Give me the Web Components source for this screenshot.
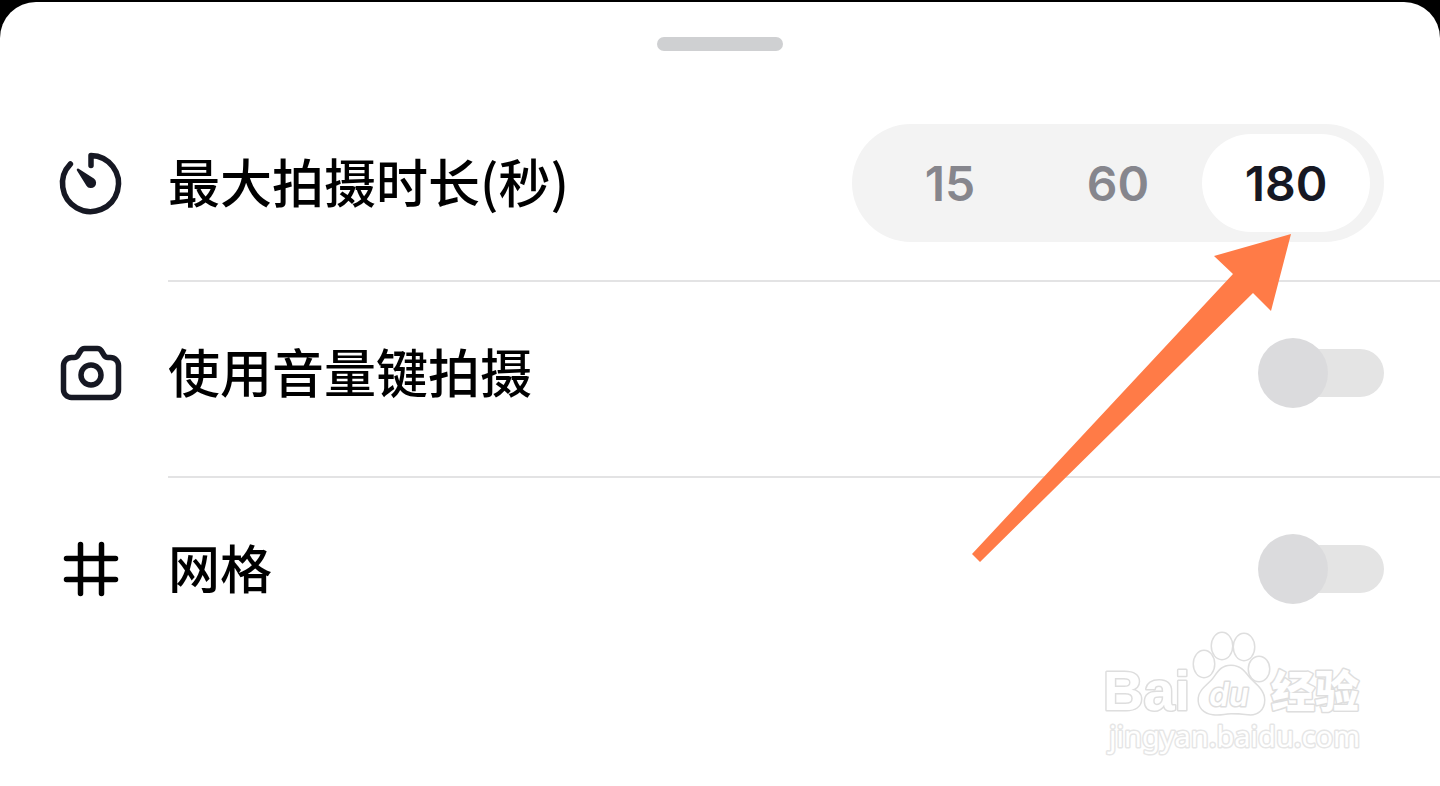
<!DOCTYPE html>
<html lang="zh-CN">
<head>
<meta charset="UTF-8">
<meta name="viewport" content="width=device-width, initial-scale=1">
<title>拍摄设置</title>
<style>
  body {
    margin: 0;
    background: #000;
    color: #000;
    font-family: Inter, "Noto Sans CJK SC", sans-serif;
  }
</style>
</head>
<body>

<bottom-sheet>
  <duration-row options="15,60,180" value="180">
    <line-icon slot="icon" name="timer"></line-icon>
    最大拍摄时长(秒)
  </duration-row>
  <toggle-row>
    <line-icon slot="icon" name="camera"></line-icon>
    使用音量键拍摄
  </toggle-row>
  <toggle-row last>
    <line-icon slot="icon" name="grid"></line-icon>
    网格
  </toggle-row>
  <pointer-arrow slot="overlay"></pointer-arrow>
  <site-watermark slot="overlay"></site-watermark>
</bottom-sheet>

<script>
/**
 * Line icons, all drawn on a 62 x 62 grid
 */
const ICONS = {
  timer: `
    <path d="M31 13.5V3.5A28 28 0 1 1 10.4 12"/>
    <path d="M18 17.8L27.5 33A4 4 0 1 0 33.2 27.6Z" fill="currentColor" stroke-width="2.5"/>`,
  camera: `
    <path d="M11.5 15.5H14c2 0 3.2-.8 4.2-2.6l2.3-3.9c1-1.7 2.2-2.5 4.2-2.5h12.6c2 0 3.2.8 4.2 2.5l2.3 3.9c1 1.8 2.2 2.6 4.2 2.6h2.5a8 8 0 0 1 8 8v24a8 8 0 0 1-8 8h-39a8 8 0 0 1-8-8v-24a8 8 0 0 1 8-8Z"/>
    <circle cx="31" cy="33" r="10"/>`,
  grid: `<path stroke="#000" d="M20.5 6.5v49M41.5 6.5v49M6.5 20.5h49M6.5 41.5h49"/>`
};

class LineIcon extends HTMLElement {
  constructor() {
    super();
    this.attachShadow({ mode: 'open' });
  }

  connectedCallback() {
    this.shadowRoot.innerHTML = `
      <style>
        :host { display: block; width: 62px; height: 62px; color: #161823; }
        svg { display: block; width: 100%; height: 100%; overflow: visible; }
      </style>
      <svg viewBox="0 0 62 62" fill="none" stroke="currentColor" stroke-width="5.5"
           stroke-linecap="round" stroke-linejoin="round" aria-hidden="true">
        ${ICONS[this.getAttribute('name')] || ''}
      </svg>
    `;
  }
}

/**
 * Bottom Sheet
 *
 * White panel with a grab handle. Rows go in the default slot.
 */
class BottomSheet extends HTMLElement {
  constructor() {
    super();
    this.attachShadow({ mode: 'open' });
  }

  connectedCallback() {
    this.shadowRoot.innerHTML = `
      <style>
        :host { display: block; padding-top: 2px; }
        .sheet { position: relative; min-height: calc(100vh - 2px); box-sizing: border-box; padding-top: 35px; border-radius: 36px 36px 0 0; background: #fff; }
        .handle { width: 126px; height: 14px; margin: 0 auto 73px; border-radius: 7px; background: #cfd0d2; }
      </style>
      <main class="sheet">
        <div class="handle"></div>
        <slot></slot>
        <slot name="overlay"></slot>
      </main>
    `;
  }
}

/**
 * Shared shell of a settings row: icon, label, control and a divider
 */
class SettingRow extends HTMLElement {
  constructor() {
    super();
    this.attachShadow({ mode: 'open' });
  }

  connectedCallback() {
    this.shadowRoot.innerHTML = `
      <style>
        :host { display: block; }
        .row { display: flex; align-items: center; padding: 56px 56px 68px 60px; }
        .label { flex: 1; margin-left: 46px; padding-bottom: 4px; font-size: 52px; line-height: 64px; font-weight: 500; font-family: "Noto Sans CJK SC", sans-serif; }
        .divider { height: 2px; margin-left: 168px; background: #e3e3e4; }
        :host([last]) .divider { display: none; }
        ${this.styles()}
      </style>
      ${this.renderRow()}
      <div class="divider"></div>
    `;
  }

  styles() {
    return '';
  }

  renderRow() {
    return '';
  }
}

class ToggleRow extends SettingRow {
  styles() {
    return `
      input { appearance: none; display: grid; align-items: center; width: 126px; height: 70px; margin: 0; cursor: pointer; }
      input::before, input::after { content: ""; grid-area: 1 / 1; }
      input::before { height: 48px; margin-left: 24px; border-radius: 24px; background: #e4e4e4; }
      input::after { width: 70px; height: 70px; border-radius: 50%; background: #dbdbdd; }
      input:checked::before { margin: 0 24px 0 0; background: #9be8ca; }
      input:checked::after { justify-self: end; background: #20c483; }
    `;
  }

  renderRow() {
    return `
      <div class="row">
        <slot name="icon"></slot>
        <label class="label" for="toggle"><slot></slot></label>
        <input type="checkbox" role="switch" id="toggle">
      </div>
    `;
  }
}

class DurationRow extends SettingRow {
  styles() {
    return `
      .row { padding-top: 0; padding-bottom: 38px; }
      .segments { display: flex; padding: 10px 14px; border-radius: 59px; background: #f3f3f3; }
      .segment { position: relative; display: grid; place-items: center; width: 168px; height: 98px; color: #86868d; font-size: 48px; line-height: 60px; font-weight: 600; cursor: pointer; }
      .segment input { appearance: none; position: absolute; inset: 0; margin: 0; border-radius: 49px; cursor: pointer; }
      .segment input:checked { background: #fff; }
      .segment input:checked + span { color: #161823; }
      .segment span { position: relative; padding-top: 2px; pointer-events: none; }
    `;
  }

  renderRow() {
    const value = this.getAttribute('value');
    const options = (this.getAttribute('options') || '').split(',');

    return `
      <div class="row">
        <slot name="icon"></slot>
        <div class="label" id="title"><slot></slot></div>
        <div class="segments" role="radiogroup" aria-labelledby="title">
          ${options.map(opt => `
            <label class="segment">
              <input type="radio" name="duration" value="${opt}" ${opt === value ? 'checked' : ''}>
              <span>${opt}</span>
            </label>
          `).join('')}
        </div>
      </div>
    `;
  }
}

/**
 * Orange arrow that lies over the rows and points at the chosen duration
 */
class PointerArrow extends HTMLElement {
  constructor() {
    super();
    this.attachShadow({ mode: 'open' });
  }

  connectedCallback() {
    this.shadowRoot.innerHTML = `
      <style>
        :host { position: absolute; top: 232px; right: 149px; pointer-events: none; }
        svg { display: block; }
      </style>
      <svg width="319" height="328" viewBox="0 0 319 328" aria-hidden="true">
        <path fill="#ff7b47" d="M319 0L242 22L261 40L0 320L8 328L281 59L299 77Z"/>
      </svg>
    `;
  }
}

/**
 * Watermark: white shapes and letters with a thin grey outline
 */
class SiteWatermark extends HTMLElement {
  constructor() {
    super();
    this.attachShadow({ mode: 'open' });
  }

  connectedCallback() {
    this.shadowRoot.innerHTML = `
      <style>
        :host { position: absolute; top: 624px; right: 70px; pointer-events: none; }
        svg { display: block; fill: #fff; stroke: #dedede; stroke-width: 3px; stroke-linejoin: round; paint-order: stroke; }
        .brand { font: 700 56px "Liberation Sans", sans-serif; }
        .paw { font: italic 600 32px Inter, sans-serif; }
        .zh { font: 900 44px "Noto Sans CJK SC", sans-serif; }
        .url { font: 400 29px "Noto Sans", sans-serif; stroke: #e6e6e6; }
      </style>
      <svg width="268" height="134" viewBox="0 0 268 134">
        <text class="brand" x="1" y="84">Bai</text>
        <ellipse cx="102" cy="38" rx="10" ry="13"/>
        <ellipse cx="120" cy="20" rx="10" ry="13"/>
        <ellipse cx="142" cy="21" rx="10" ry="13"/>
        <ellipse cx="157" cy="43" rx="10" ry="12"/>
        <path d="M129 40C139 40 143 47 148 53C155 60 162 65 162 74C162 84 155 89 146 88C138 87 135 87 129 87C122 87 119 89 111 88C102 87 96 81 97 72C98 63 107 59 112 52C117 45 120 40 129 40Z"/>
        <text class="paw" x="107" y="80">du</text>
        <text class="zh" x="169" y="82">经验</text>
        <text class="url" x="7" y="121">jingyan.baidu.com</text>
      </svg>
    `;
  }
}

customElements.define('line-icon', LineIcon);
customElements.define('bottom-sheet', BottomSheet);
customElements.define('toggle-row', ToggleRow);
customElements.define('duration-row', DurationRow);
customElements.define('pointer-arrow', PointerArrow);
customElements.define('site-watermark', SiteWatermark);
</script>
</body>
</html>
